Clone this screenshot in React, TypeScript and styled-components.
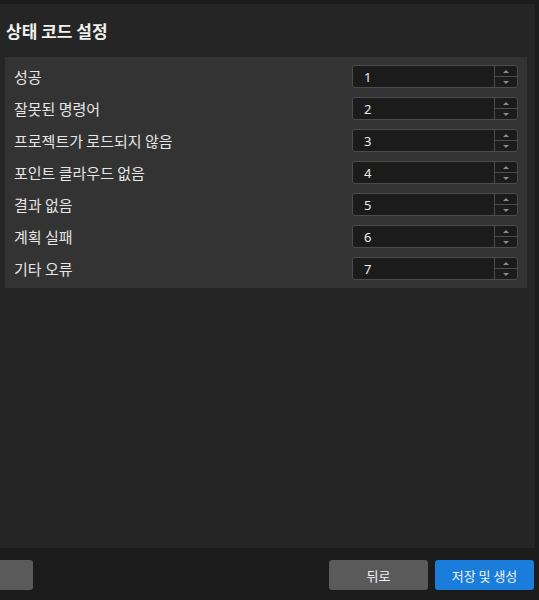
import { createGlobalStyle } from 'styled-components';
import styled from 'styled-components';

const GlobalStyle = createGlobalStyle`
	html, body {
		margin: 0;
		padding: 0;
		background: #1b1b1b;
	}
	* {
		box-sizing: border-box;
	}
`;

const Page = styled.div`
	width: 539px;
	height: 600px;
	padding-top: 4px;
	display: flex;
	flex-direction: column;
	background: #1b1b1b;
	font-family: 'Noto Sans CJK KR', 'Noto Sans', sans-serif;
	color: #e8e8e8;
	overflow: hidden;
`;

const Panel = styled.div`
	flex: 1;
	margin-right: 4px;
	background: #252525;
	padding: 16px 8px 0 5px;
`;

const Title = styled.h2`
	margin: 0 0 15px 1px;
	font-size: 17px;
	line-height: 22px;
	font-weight: 700;
	color: #f0f0f0;
`;

const Card = styled.div`
	background: #333333;
	padding: 8px 9px 8px 9px;
	display: flex;
	flex-direction: column;
	gap: 9px;
`;

const Row = styled.div`
	height: 23px;
	display: flex;
	align-items: center;
	justify-content: space-between;
`;

const Label = styled.span`
	font-size: 15px;
	color: #e6e6e6;
`;

const Spin = styled.div`
	width: 166px;
	height: 23px;
	display: flex;
	background: #1b1b1b;
	border: 1px solid #4c4c4c;
	border-radius: 3px;
`;

const SpinInput = styled.input`
	flex: 1;
	min-width: 0;
	border: none;
	outline: none;
	background: transparent;
	color: #ececec;
	font-family: 'Noto Sans', sans-serif;
	font-size: 13px;
	padding: 0 0 0 11px;
`;

const Arrows = styled.div`
	width: 23px;
	display: flex;
	flex-direction: column;
	border-left: 1px solid #4c4c4c;
`;

const Arrow = styled.button<{ $down?: boolean }>`
	flex: 1;
	padding: 0;
	border: none;
	background: transparent;
	display: flex;
	align-items: center;
	justify-content: center;
	border-top: ${(p) => (p.$down ? '1px solid #4c4c4c' : 'none')};
	&::after {
		content: '';
		width: 0;
		height: 0;
		border-left: 3px solid transparent;
		border-right: 3px solid transparent;
		${(p) => (p.$down ? 'border-top: 3px solid #8c8c8c;' : 'border-bottom: 3px solid #8c8c8c;')}
	}
`;

const Footer = styled.div`
	height: 52px;
	padding: 12px 5px 0 0;
	display: flex;
	align-items: flex-start;
	gap: 7px;
`;

const Button = styled.button<{ $primary?: boolean; $stub?: boolean }>`
	height: 30px;
	width: ${(p) => (p.$stub ? '33px' : '99px')};
	margin-right: ${(p) => (p.$stub ? 'auto' : '0')};
	border: none;
	border-radius: ${(p) => (p.$stub ? '0 3px 3px 0' : '3px')};
	background: ${(p) => (p.$primary ? '#1a7ddb' : '#5a5a5a')};
	color: #f2f2f2;
	font-family: 'Noto Sans CJK KR', 'Noto Sans', sans-serif;
	font-size: 13px;
	padding: 0;
`;

const codes = [
	{ label: '성공', value: 1 },
	{ label: '잘못된 명령어', value: 2 },
	{ label: '프로젝트가 로드되지 않음', value: 3 },
	{ label: '포인트 클라우드 없음', value: 4 },
	{ label: '결과 없음', value: 5 },
	{ label: '계획 실패', value: 6 },
	{ label: '기타 오류', value: 7 },
];

function App() {
	return (
		<>
			<GlobalStyle />
			<Page>
				<Panel>
					<Title>상태 코드 설정</Title>
					<Card>
						{codes.map((c) => (
							<Row key={c.label}>
								<Label>{c.label}</Label>
								<Spin>
									<SpinInput defaultValue={c.value} />
									<Arrows>
										<Arrow />
										<Arrow $down />
									</Arrows>
								</Spin>
							</Row>
						))}
					</Card>
				</Panel>
				<Footer>
					<Button $stub />
					<Button>뒤로</Button>
					<Button $primary>저장 및 생성</Button>
				</Footer>
			</Page>
		</>
	);
}

export default App;
